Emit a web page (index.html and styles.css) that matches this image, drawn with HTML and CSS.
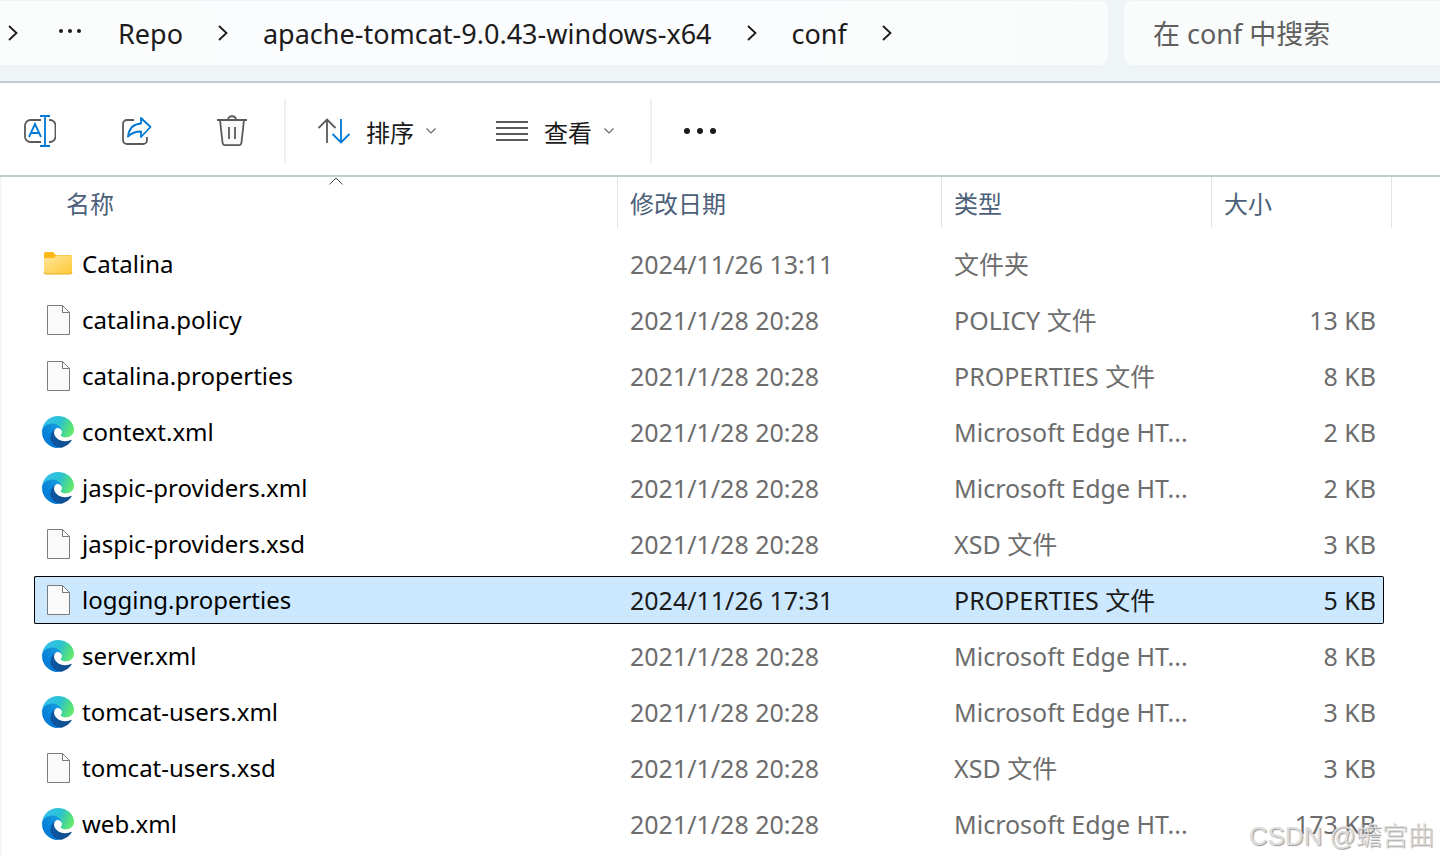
FILE: index.html
```html
<!DOCTYPE html>
<html lang="zh-CN">
<head>
    <meta charset="UTF-8">
    <title>conf</title>
    <link rel="stylesheet" href="styles.css">
</head>
<body>
    <!-- Shared icons -->
    <svg class="sprite" aria-hidden="true">
        <defs>
            <linearGradient id="folderFill" x1="0" y1="0" x2="1" y2="1">
                <stop offset="0" stop-color="#ffe59a"/>
                <stop offset="1" stop-color="#ffc937"/>
            </linearGradient>
            <linearGradient id="edgeDark" x1="0" y1="0" x2="1" y2="0">
                <stop offset="0" stop-color="#0c59a4"/>
                <stop offset="1" stop-color="#114a8b"/>
            </linearGradient>
            <linearGradient id="edgeBlue" x1="1" y1="0" x2="0.2" y2="1">
                <stop offset="0" stop-color="#1b9de2"/>
                <stop offset="0.3" stop-color="#1595df"/>
                <stop offset="0.7" stop-color="#0680d7"/>
                <stop offset="1" stop-color="#0078d4"/>
            </linearGradient>
            <linearGradient id="edgeGreen" x1="0" y1="0.3" x2="1" y2="0.6">
                <stop offset="0" stop-color="#35c1f1"/>
                <stop offset="0.5" stop-color="#2bc3d2"/>
                <stop offset="0.8" stop-color="#4ad98c"/>
                <stop offset="1" stop-color="#66eb6e"/>
            </linearGradient>
        </defs>
        <symbol id="folder" viewBox="0 0 32 32">
            <path d="M2 6a2 2 0 0 1 2-2h7l3 3h14a2 2 0 0 1 2 2v8H2z" fill="#fbb917"/>
            <path d="M2 10h9.500l3-2.500H29a1 1 0 0 1 1 1V24a2 2 0 0 1-2 2H4a2 2 0 0 1-2-2z" fill="url(#folderFill)"/>
            <path d="M2 24a2 2 0 0 0 2 2h24a2 2 0 0 0 2-2" fill="none" stroke="#eda91c"/>
        </symbol>
        <symbol id="file" viewBox="0 0 32 32">
            <path d="M5.500 1.500h15l7 7v22h-22z" fill="#fafafa" stroke="#7b7b7b"/>
            <path d="M20.500 1.500v7h7" fill="none" stroke="#7b7b7b"/>
        </symbol>
        <symbol id="edge" viewBox="0 0 256 256">
            <g transform="translate(-4.630 -4.920)">
                <path fill="url(#edgeDark)" d="M235.680 195.460a93.730 93.730 0 0 1-10.540 4.710 101.870 101.870 0 0 1-35.900 6.460c-47.320 0-88.540-32.550-88.540-74.320A31.480 31.480 0 0 1 117.130 105c-42.800 1.800-53.800 46.400-53.800 72.530 0 73.880 68.090 81.370 82.760 81.370 7.910 0 19.840-2.300 27-4.560l1.310-.44a128.340 128.340 0 0 0 66.600-52.800 4 4 0 0 0-5.320-5.640z"/>
                <path fill="url(#edgeBlue)" d="M110.340 246.340A79.200 79.200 0 0 1 87.600 225a80.720 80.720 0 0 1 29.530-120c3.120-1.470 8.450-4.130 15.540-4a32.350 32.350 0 0 1 25.690 13 31.880 31.880 0 0 1 6.360 18.660c0-.21 24.460-79.600-80-79.600-43.900 0-80 41.660-80 78.210a130.150 130.150 0 0 0 12.110 56 128 128 0 0 0 156.380 67.110 75.550 75.550 0 0 1-62.780-8z"/>
                <path fill="url(#edgeGreen)" d="M156.940 153.780c-.81 1.050-3.300 2.500-3.300 5.660 0 2.610 1.700 5.120 4.720 7.230 14.380 10 41.490 8.680 41.560 8.680a59.560 59.560 0 0 0 30.270-8.350 61.380 61.380 0 0 0 30.430-52.880c.26-22.410-8-37.310-11.340-43.910C228.090 28.760 182.350 4.920 132.610 4.920a128 128 0 0 0-128 126.200c.48-36.540 36.800-66.050 80-66.050 3.500 0 23.460.34 42 10.070 16.340 8.580 24.900 18.940 30.850 29.210 6.180 10.670 7.280 24.150 7.280 29.520s-2.740 13.330-7.800 19.910z"/>
            </g>
        </symbol>
        <symbol id="crumb" viewBox="0 0 10 16">
            <path d="M1 1l7.500 7L1 15" fill="none" stroke="#1b1b1b" stroke-width="1.800"/>
        </symbol>
        <symbol id="chevron" viewBox="0 0 10 6">
            <path d="M0.500 0.500L5 5l4.500-4.500" fill="none" stroke="#666" stroke-width="1.200"/>
        </symbol>
    </svg>

    <header class="topbar">
        <nav class="address" aria-label="路径">
            <svg class="crumb-icon"><use href="#crumb"/></svg>
            <button class="crumb-more" aria-label="更多路径">
                <svg width="30" height="16" viewBox="0 0 30 16" fill="#1b1b1b">
                    <circle cx="8" cy="6" r="2"/><circle cx="17" cy="6" r="2"/><circle cx="26" cy="6" r="2"/>
                </svg>
            </button>
            <a href="#">Repo</a>
            <svg class="crumb-icon"><use href="#crumb"/></svg>
            <a href="#">apache-tomcat-9.0.43-windows-x64</a>
            <svg class="crumb-icon"><use href="#crumb"/></svg>
            <a href="#">conf</a>
            <svg class="crumb-icon"><use href="#crumb"/></svg>
        </nav>
        <input class="search" type="text" placeholder="在 conf 中搜索" aria-label="搜索">
    </header>

    <div class="toolbar">
        <div class="actions">
            <button aria-label="重命名">
                <svg width="32" height="32" viewBox="0 0 32 32" fill="none" stroke-width="1.800">
                    <path d="M17 5H6.500A5.500 5.500 0 0 0 1 10.500v11A5.500 5.500 0 0 0 6.500 27H17M25 5h1a5.500 5.500 0 0 1 5.500 5.500v11A5.500 5.500 0 0 1 26 27h-1" stroke="#5a5a5a"/>
                    <path d="M5 22l6-13 6 13M7 18h8M16 1h10M16 31h10M21 1v30" stroke="#0078d4"/>
                </svg>
            </button>
            <button aria-label="共享">
                <svg width="32" height="32" viewBox="0 0 32 32" fill="none" stroke-width="1.800">
                    <path d="M14 5H7a4 4 0 0 0-4 4v16a4 4 0 0 0 4 4h16a4 4 0 0 0 4-4v-3" stroke="#5a5a5a"/>
                    <path d="M21 3l9.500 9L21 22v-5.500c-6 0-9.500 1.500-13 5C9 13.500 13.500 9 21 8.500z" stroke="#0078d4" stroke-linejoin="round"/>
                </svg>
            </button>
            <button aria-label="删除">
                <svg width="32" height="32" viewBox="0 0 32 32" fill="none" stroke="#5a5a5a" stroke-width="1.800">
                    <path d="M4 5l2.500 22.500a3 3 0 0 0 3 2.700h13a3 3 0 0 0 3-2.700L28 5" fill="#fafafa"/>
                    <path d="M1 5h30M12 5c0-5 8-5 8 0M13 12v12M19 12v12"/>
                </svg>
            </button>
        </div>
        <div class="menus">
            <button class="menu">
                <svg width="32" height="32" viewBox="0 0 32 32" fill="none" stroke-width="1.800">
                    <path d="M9 28V5M0.500 13L9 4.500l8.500 8.500" stroke="#5a5a5a"/>
                    <path d="M23 4v23M14.500 19l8.500 8.500 8.500-8.500" stroke="#0078d4"/>
                </svg>
                排序
                <svg class="menu-arrow"><use href="#chevron"/></svg>
            </button>
            <button class="menu">
                <svg width="32" height="32" viewBox="0 0 32 32" stroke="#5a5a5a" stroke-width="2">
                    <path d="M0 7h32M0 13h32M0 19h32M0 25h32"/>
                </svg>
                查看
                <svg class="menu-arrow"><use href="#chevron"/></svg>
            </button>
        </div>
        <button aria-label="更多">
            <svg width="32" height="32" viewBox="0 0 32 32" fill="#1b1b1b">
                <circle cx="3" cy="16" r="3"/><circle cx="16" cy="16" r="3"/><circle cx="29" cy="16" r="3"/>
            </svg>
        </button>
    </div>

    <main>
        <table>
            <colgroup>
                <col class="col-name">
                <col class="col-date">
                <col class="col-type">
                <col class="col-size">
                <col class="col-end">
            </colgroup>
            <thead>
                <tr>
                    <th aria-sort="ascending">
                        <button>名称
                            <svg class="sort-mark" width="18" height="8" viewBox="0 0 18 8" fill="none" stroke="#444"><path d="M3.500 7.500L10 1l6.500 6.500"/></svg>
                        </button>
                    </th>
                    <th><button>修改日期</button></th>
                    <th><button>类型</button></th>
                    <th colspan="2"><button>大小</button></th>
                </tr>
            </thead>
            <tbody>
                <tr>
                    <td><span class="name"><svg><use href="#folder"/></svg>Catalina</span></td>
                    <td>2024/11/26 13:11</td>
                    <td>文件夹</td>
                    <td></td>
                </tr>
                <tr>
                    <td><span class="name"><svg><use href="#file"/></svg>catalina.policy</span></td>
                    <td>2021/1/28 20:28</td>
                    <td>POLICY 文件</td>
                    <td>13 KB</td>
                </tr>
                <tr>
                    <td><span class="name"><svg><use href="#file"/></svg>catalina.properties</span></td>
                    <td>2021/1/28 20:28</td>
                    <td>PROPERTIES 文件</td>
                    <td>8 KB</td>
                </tr>
                <tr>
                    <td><span class="name"><svg><use href="#edge"/></svg>context.xml</span></td>
                    <td>2021/1/28 20:28</td>
                    <td>Microsoft Edge HT...</td>
                    <td>2 KB</td>
                </tr>
                <tr>
                    <td><span class="name"><svg><use href="#edge"/></svg>jaspic-providers.xml</span></td>
                    <td>2021/1/28 20:28</td>
                    <td>Microsoft Edge HT...</td>
                    <td>2 KB</td>
                </tr>
                <tr>
                    <td><span class="name"><svg><use href="#file"/></svg>jaspic-providers.xsd</span></td>
                    <td>2021/1/28 20:28</td>
                    <td>XSD 文件</td>
                    <td>3 KB</td>
                </tr>
                <tr class="selected">
                    <td><span class="name"><svg><use href="#file"/></svg>logging.properties</span></td>
                    <td>2024/11/26 17:31</td>
                    <td>PROPERTIES 文件</td>
                    <td>5 KB</td>
                </tr>
                <tr>
                    <td><span class="name"><svg><use href="#edge"/></svg>server.xml</span></td>
                    <td>2021/1/28 20:28</td>
                    <td>Microsoft Edge HT...</td>
                    <td>8 KB</td>
                </tr>
                <tr>
                    <td><span class="name"><svg><use href="#edge"/></svg>tomcat-users.xml</span></td>
                    <td>2021/1/28 20:28</td>
                    <td>Microsoft Edge HT...</td>
                    <td>3 KB</td>
                </tr>
                <tr>
                    <td><span class="name"><svg><use href="#file"/></svg>tomcat-users.xsd</span></td>
                    <td>2021/1/28 20:28</td>
                    <td>XSD 文件</td>
                    <td>3 KB</td>
                </tr>
                <tr>
                    <td><span class="name"><svg><use href="#edge"/></svg>web.xml</span></td>
                    <td>2021/1/28 20:28</td>
                    <td>Microsoft Edge HT...</td>
                    <td>173 KB</td>
                </tr>
            </tbody>
        </table>
    </main>

    <div class="watermark">CSDN @蟾宫曲</div>
</body>
</html>
```

FILE: styles.css
```css
* {
    box-sizing: border-box;
}
body {
    margin: 0;
    min-height: 100vh;
    background-color: #fff;
    color: #1b1b1b;
    font-family: "Noto Sans", "Noto Sans CJK SC", sans-serif;
    font-size: 24px;
    position: relative;
}
button {
    border: none;
    padding: 0;
    background: none;
    color: inherit;
    font: inherit;
    cursor: pointer;
}
svg {
    display: block;
    flex-shrink: 0;
}
.sprite {
    position: absolute;
    width: 0;
    height: 0;
}

/* address bar and search */
.topbar {
    display: flex;
    gap: 16px;
    height: 83px;
    padding: 1px 0 16px;
    background-color: #eff4f6;
    border-bottom: 2px solid #bdcccf;
}
.address {
    display: flex;
    align-items: center;
    gap: 35px;
    flex: 1;
    padding-left: 8px;
    background: linear-gradient(90deg, #fbfdfc, #fbfcfe 30%, #fbfcfe 60%, #fafcfb);
    border-radius: 0 8px 8px 0;
    font-size: 27px;
}
.address a {
    color: #1b1b1b;
    text-decoration: none;
}
.crumb-icon {
    width: 10px;
    height: 16px;
}
.search {
    width: 316px;
    border: none;
    border-radius: 8px 0 0 8px;
    padding: 0 0 0 29px;
    background-color: #fafcfc;
    font-family: inherit;
    font-size: 27px;
}
.search::placeholder {
    color: #5f5f5f;
    opacity: 1;
}

/* toolbar */
.toolbar {
    display: flex;
    align-items: center;
    height: 94px;
    padding: 4px 0 0 24px;
    border-bottom: 2px solid #bdcccf;
}
.actions {
    display: flex;
    gap: 64px;
}
.menus {
    display: flex;
    align-items: center;
    gap: 60px;
    height: 64px;
    margin: 0 32px 0 36px;
    padding: 0 36px 0 32px;
    border-left: 2px solid #efefef;
    border-right: 2px solid #efefef;
}
.menu {
    display: flex;
    align-items: center;
    gap: 16px;
}
.menu-arrow {
    width: 10px;
    height: 6px;
    margin-left: -4px;
}

/* file list */
main {
    display: flow-root;
    padding-left: 32px;
    border-left: 2px solid #f6f6f6;
}
table {
    table-layout: fixed;
    width: 1358px;
    margin-top: -8px;
    border-spacing: 0 8px;
}
.col-name {
    width: 583px;
}
.col-date {
    width: 324px;
}
.col-type {
    width: 270px;
}
.col-size {
    width: 173px;
}
.col-end {
    width: 8px;
}
th {
    height: 55px;
    padding: 0;
    vertical-align: top;
    font-weight: normal;
}
th button {
    display: block;
    position: relative;
    width: 100%;
    height: 51px;
    padding-left: 12px;
    border-left: 1px solid #e3e3e3;
    color: #4c607a;
    text-align: left;
}
th:first-child button {
    padding-left: 32px;
    border-left: none;
}
th:last-child button {
    border-right: 1px solid #e3e3e3;
}
.sort-mark {
    position: absolute;
    top: 0;
    left: 50%;
}
td {
    height: 48px;
    padding: 0 8px 0 13px;
    color: #6d6d6d;
    font-size: 25px;
    line-height: 32px;
    white-space: nowrap;
}
td:first-child {
    padding-left: 8px;
    color: #000;
    font-size: 24px;
}
td:nth-child(4) {
    text-align: right;
}
.name {
    display: flex;
    align-items: center;
    gap: 8px;
}
.name svg {
    width: 32px;
    height: 32px;
}
.selected td {
    background-color: #cce8ff;
    border: solid #000;
    border-width: 1px 0;
    color: #1b1b1b;
}
.selected td:first-child {
    padding-left: 7px;
    border-left-width: 1px;
    border-radius: 2px 0 0 2px;
    color: #000;
}
.selected td:last-child {
    padding-right: 7px;
    border-right-width: 1px;
    border-radius: 0 2px 2px 0;
}

.watermark {
    position: absolute;
    right: 6px;
    bottom: 8px;
    color: #dedede;
    font-family: "Liberation Sans", "Noto Sans CJK SC", sans-serif;
    font-size: 26px;
    font-weight: 300;
    line-height: 32px;
    text-shadow: 1px 1px 1px #999;
}
```
